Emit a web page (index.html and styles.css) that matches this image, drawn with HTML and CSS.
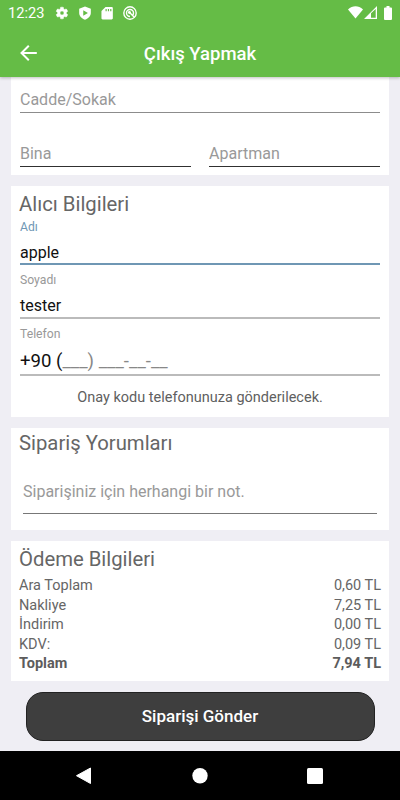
FILE: index.html
```html
<!DOCTYPE html>
<html lang="tr">
<head>
    <meta charset="UTF-8">
    <meta name="viewport" content="width=device-width, initial-scale=1.0">
    <title>Çıkış Yapmak</title>
    <link rel="stylesheet" href="styles.css">
</head>
<body>
    <!-- Header -->
    <header class="header">
        <div class="status-bar">
            <span class="clock">12:23</span>
            <svg class="status-icon" viewBox="0 0 24 24"><path fill-rule="evenodd" stroke="#fff" stroke-width=".8" d="M19.4 13c0-.3.1-.6.1-1s0-.7-.1-1l2.1-1.7c.2-.1.3-.4.1-.6l-2-3.5c-.1-.2-.4-.3-.6-.2l-2.5 1c-.5-.4-1.1-.7-1.7-1l-.4-2.6c0-.2-.2-.4-.5-.4h-4c-.3 0-.5.2-.5.4L9 5c-.6.3-1.2.6-1.7 1l-2.5-1c-.2-.1-.5 0-.6.2l-2 3.5c-.1.2-.1.5.1.6L4.5 11c0 .3-.1.7-.1 1s0 .7.1 1l-2.2 1.7c-.2.1-.2.4-.1.6l2 3.5c.1.2.4.3.6.2l2.5-1c.5.4 1.1.7 1.7 1l.4 2.6c0 .2.2.4.5.4h4c.3 0 .5-.2.5-.4l.4-2.6c.6-.3 1.2-.6 1.7-1l2.5 1c.2.1.5 0 .6-.2l2-3.5c.1-.2.1-.5-.1-.6zM12 8.500a3.500 3.500 0 1 1 0 7 3.500 3.500 0 0 1 0-7z"/></svg>
            <svg class="status-icon" viewBox="0 0 24 24"><path fill-rule="evenodd" d="M12 1L2 4.500v7c0 5.500 4 10 10 12 6-2 10-6.500 10-12v-7zM9 7.300l8 4.700-8 4.700z"/></svg>
            <svg class="status-icon" viewBox="0 0 24 24"><path fill-rule="evenodd" d="M20 1.500H9.500L2.500 8.500V21c0 1.100.9 2 2 2H20c1.100 0 2-.9 2-2V3.500c0-1.100-.9-2-2-2zM9.500 5h2v4h-2zM13.500 5h2v4h-2zM17.500 5h2v4h-2z"/></svg>
            <svg class="status-icon" viewBox="0 0 24 24"><g fill="none" stroke="#fff" stroke-width="2.4"><circle cx="12" cy="12" r="10.6"/><path d="M12 18a6 6 0 1 1 6-6c0 1.600-.6 3-1.500 4M10 10l9 9"/></g><circle cx="11" cy="11" r="2.5"/></svg>
            <div class="status-right">
                <svg class="wifi" viewBox="0 0 15 13"><path d="M0 3.500C4.500-.9 10.500-.9 15 3.500L7.500 12.500z"/></svg>
                <svg class="signal" viewBox="0 0 13 13"><path fill-rule="evenodd" d="M0 13L13 0v13zM7 7.200V11.700H11.700V3z"/></svg>
                <svg class="battery" viewBox="0 0 8 14"><path d="M2.500 0h3v1.500H7q1 0 1 1V13q0 1-1 1H1q-1 0-1-1V2.500q0-1 1-1h1.500z"/></svg>
            </div>
        </div>
        <div class="title-bar">
            <svg class="back" viewBox="0 0 18 16"><path d="M16.800 8H1.500M8.800 .8L1.500 8l7.300 7.200"/></svg>
            <h1>Çıkış Yapmak</h1>
        </div>
    </header>

    <main class="content">
        <!-- Address -->
        <section class="card address">
            <div class="field street">Cadde/Sokak</div>
            <div class="field-row">
                <div class="field">Bina</div>
                <div class="field">Apartman</div>
            </div>
        </section>

        <!-- Recipient -->
        <section class="card recipient">
            <h2>Alıcı Bilgileri</h2>
            <div class="input-group active">
                <div class="label">Adı</div>
                <div class="value">apple</div>
            </div>
            <div class="input-group">
                <div class="label">Soyadı</div>
                <div class="value">tester</div>
            </div>
            <div class="input-group phone">
                <div class="label">Telefon</div>
                <div class="value">+90 (<span class="mask">___) ___-__-__</span></div>
            </div>
            <p class="hint">Onay kodu telefonunuza gönderilecek.</p>
        </section>

        <!-- Comments -->
        <section class="card comments">
            <h2>Sipariş Yorumları</h2>
            <div class="field comment">Siparişiniz için herhangi bir not.</div>
        </section>

        <!-- Payment -->
        <section class="card payment">
            <h2>Ödeme Bilgileri</h2>
            <div class="line"><span>Ara Toplam</span><span>0,60 TL</span></div>
            <div class="line"><span>Nakliye</span><span>7,25 TL</span></div>
            <div class="line"><span>İndirim</span><span>0,00 TL</span></div>
            <div class="line"><span>KDV:</span><span>0,09 TL</span></div>
            <div class="line total"><span>Toplam</span><span>7,94 TL</span></div>
        </section>

        <button class="submit-button">Siparişi Gönder</button>
    </main>

    <nav class="nav-bar">
        <svg viewBox="0 0 400 49"><path d="M76.500 24.700L90.500 17v15.500z" stroke="#fff" stroke-linejoin="round"/><circle cx="200" cy="24.800" r="7.700"/><rect x="307" y="17" width="16" height="16" rx="1.5"/></svg>
    </nav>
</body>
</html>
```
FILE: styles.css
```css
* {
    box-sizing: border-box;
}
body {
    display: flex;
    flex-direction: column;
    width: 400px;
    height: 800px;
    margin: 0;
    overflow: hidden;
    font-family: Roboto, sans-serif;
    font-size: 15px;
    background: #efeef4;
}
svg {
    fill: #fff;
}
.header {
    position: relative;
    flex: none;
    height: 77px;
    color: #fff;
    background: #65bc46;
    box-shadow: 0 1px 3px rgba(0, 0, 0, 0.25);
}
.status-bar {
    display: flex;
    align-items: center;
    height: 25px;
    padding: 0 8px;
}
.clock {
    width: 47px;
    font-size: 14.6px;
}
.status-icon {
    width: 14px;
    height: 14px;
    margin-right: 8.7px;
}
.status-right {
    display: flex;
    align-items: center;
    margin-left: auto;
}
.wifi {
    width: 15px;
    height: 13px;
}
.signal {
    width: 13px;
    height: 13px;
    margin: 0 7px 0 1px;
}
.battery {
    width: 8px;
    height: 14px;
}
.title-bar {
    display: grid;
    grid-template-columns: 20px 1fr 20px;
    align-items: center;
    height: 56px;
    padding: 0 20px;
}
.back {
    width: 18px;
    height: 16px;
    fill: none;
    stroke: #fff;
    stroke-width: 2;
}
h1 {
    margin: 0;
    padding-top: 2px;
    font-size: 18.5px;
    font-weight: 500;
    text-align: center;
}
.content {
    flex: 1;
    padding: 0 11px;
}
.card {
    margin-bottom: 11px;
    padding: 0 9px;
    background: #fff;
}
h2 {
    height: 34px;
    margin: 0 0 0 -1px;
    font-size: 20.3px;
    font-weight: 400;
    line-height: 36px;
    color: #666;
}
.field {
    border-bottom: 1px solid #303030;
    line-height: 24px;
    font-size: 16px;
    color: #999;
}
.address {
    height: 98px;
}
.street {
    padding-top: 11px;
    border-color: #8c8c8c;
}
.field-row {
    display: grid;
    grid-template-columns: 170.5px 171px;
    justify-content: space-between;
    padding-top: 29px;
}
.recipient {
    height: 231px;
}
.input-group {
    height: 53.5px;
    border-bottom: 2px solid #bbb;
}
.input-group.active {
    height: 46px;
    border-color: #6f97b4;
}
.label {
    padding-top: 7px;
    font-size: 12.2px;
    line-height: 16px;
    color: #999;
}
.active .label {
    padding-top: 0;
    margin-top: -1px;
    color: #6f97b4;
}
.value {
    padding-top: 6px;
    font-size: 16px;
    line-height: 24px;
    color: #111;
}
.phone {
    height: 57.5px;
}
.phone .value {
    padding-top: 7px;
    font-size: 18.6px;
}
.mask {
    color: #888;
}
.hint {
    margin: 12px 0 0;
    line-height: 20px;
    font-size: 14.5px;
    text-align: center;
    color: #606060;
}
.comments {
    height: 102px;
}
.comments h2 {
    line-height: 30px;
}
.comment {
    margin: 0 3px;
    padding: 18px 0 9px;
    border-color: #777;
}
.payment {
    height: 140px;
    padding: 0 8px;
}
.payment h2 {
    height: 35px;
    margin-left: 0;
    line-height: 36px;
}
.line {
    display: flex;
    justify-content: space-between;
    line-height: 19.6px;
    font-size: 14.5px;
    color: #666;
}
.total {
    font-weight: 700;
    color: #5c5c5c;
}
.submit-button {
    display: block;
    width: 349px;
    height: 49px;
    margin: -0.5px 0 0 14.5px;
    padding: 0;
    border: 1px solid #222;
    border-radius: 17px;
    font-family: inherit;
    font-size: 17px;
    font-weight: 500;
    color: #fff;
    background: #3e3e3e;
}
.nav-bar {
    flex: none;
    height: 49px;
    background: #000;
}
.nav-bar svg {
    display: block;
    width: 400px;
    height: 49px;
}
```
